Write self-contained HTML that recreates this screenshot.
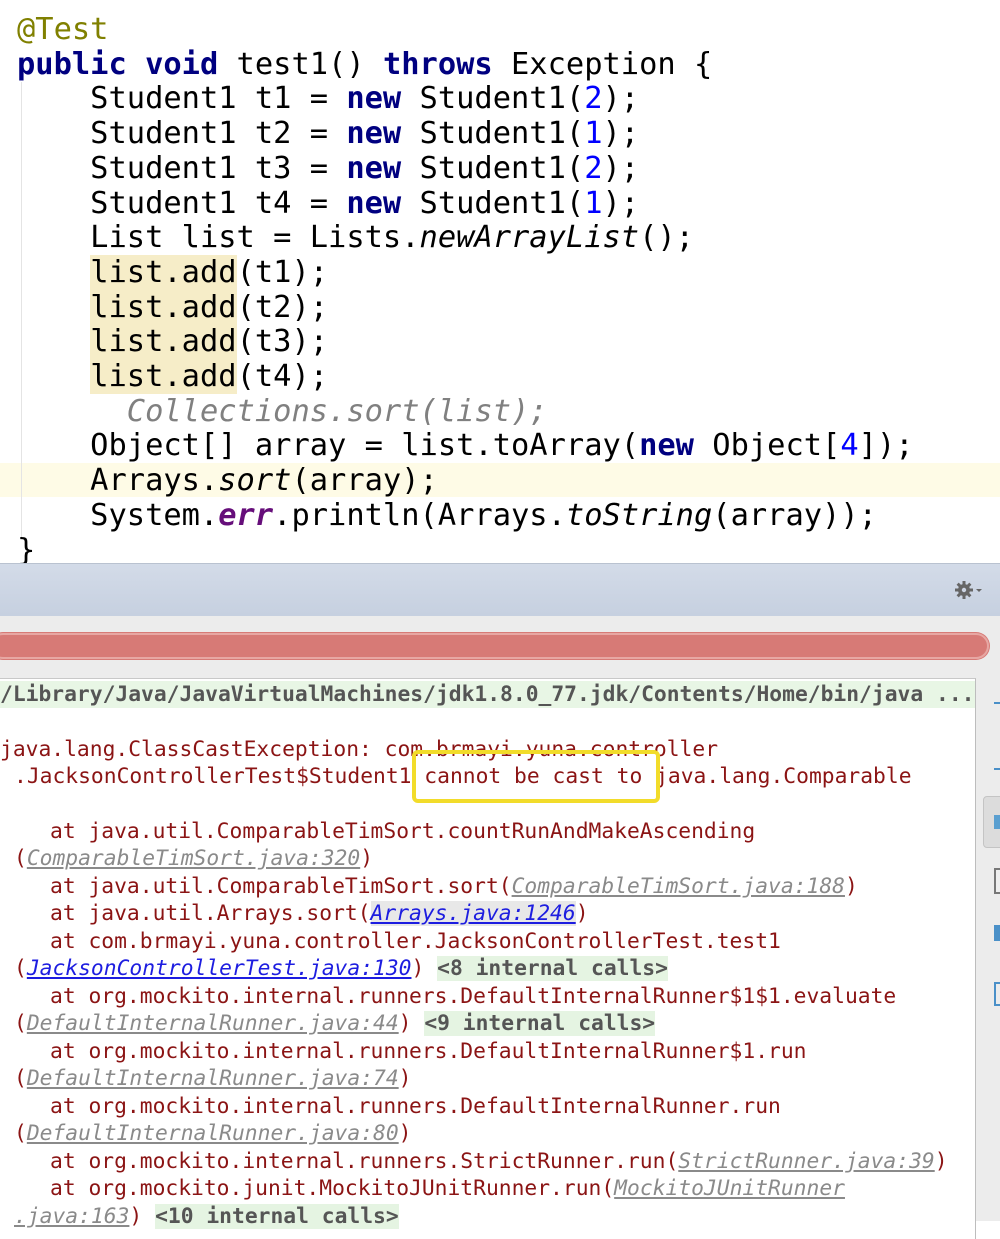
<!DOCTYPE html>
<html><head><meta charset="utf-8"><style>
html,body{margin:0;padding:0;}
body{width:1000px;height:1221px;position:relative;overflow:hidden;background:#fff;font-family:"DejaVu Sans Mono","Liberation Mono",monospace;}
.code{position:absolute;left:0;top:0;width:1000px;height:563px;background:#fff;}
.cl{position:absolute;left:17px;font-size:30.4px;line-height:34.7px;height:34.7px;white-space:pre;color:#000;}
.kw{color:#000080;font-weight:bold;}
.num{color:#0000ff;}
.it{font-style:italic;}
.ann{color:#808000;}
.hl{background:#f6edc8;}
.cur{position:absolute;left:0;top:463px;width:1000px;height:34px;background:#fefbe6;}
.guide{position:absolute;left:21px;top:82px;width:1px;height:455px;background:#e4e4e4;}
.bar{position:absolute;left:0;top:563px;width:1000px;height:52px;background:linear-gradient(#d3dbe8,#c6d0e0);border-top:1px solid #b9c2d0;border-bottom:1px solid #b4bccb;}
.gray{position:absolute;left:0;top:616px;width:1000px;height:605px;background:#ececec;}
.red{position:absolute;left:-10px;top:633px;width:995px;height:22px;background:#d77a76;border:2px solid #e7a7a3;border-radius:13px;box-shadow:0 0 0 1px #d77a76;}
.con{position:absolute;left:0;top:678px;width:975px;height:560px;background:#fff;border-right:1px solid #bdbdbd;border-top:1px solid #c8c8c8;}
.ln{position:absolute;font-size:21.3px;line-height:27px;white-space:pre;color:#8b1414;}
.pth{background:#e8f6e5;color:#555;font-weight:bold;width:975px;left:0;}
.g{color:#8a8a8a;font-style:italic;text-decoration:underline;}
.b{color:#1d1de0;font-style:italic;text-decoration:underline;}
.ic{background:#e5f4e2;color:#555;font-weight:bold;}
.box{position:absolute;left:412px;top:750px;width:240px;height:45px;border:4px solid #f2dc2a;border-radius:6px;}
.side{position:absolute;left:983px;top:796px;width:22px;height:50px;background:#dcdcdc;border:1px solid #c4c4c4;border-radius:4px;}
.si{position:absolute;left:994px;width:8px;}
</style></head><body>
<div class="code">
<div class="cur"></div>
<div class="guide"></div>
<div class="cl ann" style="top:13px">@Test</div>
<div class="cl" style="top:47.7px"><span class="kw">public void</span> test1() <span class="kw">throws</span> Exception {</div>
<div class="cl" style="top:82.4px">    Student1 t1 = <span class="kw">new</span> Student1(<span class="num">2</span>);</div>
<div class="cl" style="top:117.1px">    Student1 t2 = <span class="kw">new</span> Student1(<span class="num">1</span>);</div>
<div class="cl" style="top:151.8px">    Student1 t3 = <span class="kw">new</span> Student1(<span class="num">2</span>);</div>
<div class="cl" style="top:186.5px">    Student1 t4 = <span class="kw">new</span> Student1(<span class="num">1</span>);</div>
<div class="cl" style="top:221.2px">    List list = Lists.<span class="it">newArrayList</span>();</div>
<div class="cl" style="top:255.9px">    <span class="hl">list.add</span>(t1);</div>
<div class="cl" style="top:290.6px">    <span class="hl">list.add</span>(t2);</div>
<div class="cl" style="top:325.3px">    <span class="hl">list.add</span>(t3);</div>
<div class="cl" style="top:360px">    <span class="hl">list.add</span>(t4);</div>
<div class="cl it" style="top:394.7px;color:#808080">      Collections.sort(list);</div>
<div class="cl" style="top:429.4px">    Object[] array = list.toArray(<span class="kw">new</span> Object[<span class="num">4</span>]);</div>
<div class="cl" style="top:464.1px">    Arrays.<span class="it">sort</span>(array);</div>
<div class="cl" style="top:498.8px">    System.<span class="it" style="color:#660e7a;font-weight:bold">err</span>.println(Arrays.<span class="it">toString</span>(array));</div>
<div class="cl" style="top:533.5px">}</div>
</div>
<div class="bar">
<svg style="position:absolute;left:954px;top:16px" width="30" height="20" viewBox="0 0 30 20"><g fill="#666"><circle cx="10" cy="10" r="6"/><rect x="8.5" y="1" width="3" height="18"/><rect x="1" y="8.5" width="18" height="3"/><rect x="8.5" y="1" width="3" height="18" transform="rotate(45 10 10)"/><rect x="8.5" y="1" width="3" height="18" transform="rotate(-45 10 10)"/></g><circle cx="10" cy="10" r="2.2" fill="#ccd4e2"/><path d="M22 9h6l-3 3z" fill="#666"/></svg>
</div>
<div class="gray"></div>
<div class="red"></div>
<div class="side"></div>
<div class="si" style="top:702px;height:6px;border-top:2px solid #4a90c8"></div>
<div class="si" style="top:762px;height:6px;border-bottom:2px solid #4a90c8"></div>
<div class="si" style="top:815px;height:14px;background:#5a9fd0"></div>
<div class="si" style="top:868px;height:22px;border:2px solid #777;background:#eee"></div>
<div class="si" style="top:925px;height:16px;background:#4a90c8"></div>
<div class="si" style="top:982px;height:20px;border:2px solid #4a90c8"></div>
<div class="con">
<div class="ln pth" style="top:2px">/Library/Java/JavaVirtualMachines/jdk1.8.0_77.jdk/Contents/Home/bin/java ...</div>
<div class="ln" style="top:57px;left:0">java.lang.ClassCastException: com.brmayi.yuna.controller</div>
<div class="ln" style="top:84px;left:14px">.JacksonControllerTest$Student1 cannot be cast to java.lang.Comparable</div>
<div class="ln" style="top:139px;left:50px">at java.util.ComparableTimSort.countRunAndMakeAscending</div>
<div class="ln" style="top:166px;left:14px">(<span class="g">ComparableTimSort.java:320</span>)</div>
<div class="ln" style="top:194px;left:50px">at java.util.ComparableTimSort.sort(<span class="g">ComparableTimSort.java:188</span>)</div>
<div class="ln" style="top:221px;left:50px">at java.util.Arrays.sort(<span class="b" style="background:#e8e8e8">Arrays.java:1246</span>)</div>
<div class="ln" style="top:249px;left:50px">at com.brmayi.yuna.controller.JacksonControllerTest.test1</div>
<div class="ln" style="top:276px;left:14px">(<span class="b">JacksonControllerTest.java:130</span>) <span class="ic">&lt;8 internal calls&gt;</span></div>
<div class="ln" style="top:304px;left:50px">at org.mockito.internal.runners.DefaultInternalRunner$1$1.evaluate</div>
<div class="ln" style="top:331px;left:14px">(<span class="g">DefaultInternalRunner.java:44</span>) <span class="ic">&lt;9 internal calls&gt;</span></div>
<div class="ln" style="top:359px;left:50px">at org.mockito.internal.runners.DefaultInternalRunner$1.run</div>
<div class="ln" style="top:386px;left:14px">(<span class="g">DefaultInternalRunner.java:74</span>)</div>
<div class="ln" style="top:414px;left:50px">at org.mockito.internal.runners.DefaultInternalRunner.run</div>
<div class="ln" style="top:441px;left:14px">(<span class="g">DefaultInternalRunner.java:80</span>)</div>
<div class="ln" style="top:469px;left:50px">at org.mockito.internal.runners.StrictRunner.run(<span class="g">StrictRunner.java:39</span>)</div>
<div class="ln" style="top:496px;left:50px">at org.mockito.junit.MockitoJUnitRunner.run(<span class="g">MockitoJUnitRunner</span></div>
<div class="ln" style="top:524px;left:14px"><span class="g">.java:163</span>) <span class="ic">&lt;10 internal calls&gt;</span></div>
</div>
<div class="box"></div>
</body></html>
